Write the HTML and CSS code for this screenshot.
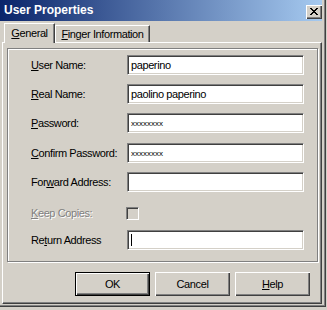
FILE: index.html
```html
<!DOCTYPE html>
<html lang="en">
    <head>
        <meta charset="UTF-8" />
        <title>User Properties</title>
        <link rel="stylesheet" href="styles.css">
    </head>
    <body>
        <div class="window">
            <div class="titlebar">
                <span class="title">User Properties</span>
                <span class="close">
                    <svg width="8" height="7" viewBox="0 0 8 7" shape-rendering="crispEdges">
                        <path d="M0 0h2v1H0z M6 0h2v1H6z M1 1h2v1H1z M5 1h2v1H5z M2 2h4v1H2z M3 3h2v1H3z M2 4h4v1H2z M1 5h2v1H1z M5 5h2v1H5z M0 6h2v1H0z M6 6h2v1H6z" fill="#000" />
                    </svg>
                </span>
            </div>

            <div class="tabs">
                <div class="tab active"><span><u>G</u>eneral</span></div>
                <div class="tab finger"><span><u>F</u>inger Information</span></div>
            </div>

            <div class="panel">
                <div class="group">
                    <div class="row">
                        <div class="label"><u>U</u>ser Name:</div>
                        <div class="field">paperino</div>
                    </div>
                    <div class="row">
                        <div class="label"><u>R</u>eal Name:</div>
                        <div class="field">paolino paperino</div>
                    </div>
                    <div class="row">
                        <div class="label"><u>P</u>assword:</div>
                        <div class="field secret">xxxxxxxx</div>
                    </div>
                    <div class="row confirm">
                        <div class="label"><u>C</u>onfirm Password:</div>
                        <div class="field secret">xxxxxxxx</div>
                    </div>
                    <div class="row">
                        <div class="label">For<u>w</u>ard Address:</div>
                        <div class="field"></div>
                    </div>
                    <div class="row keep">
                        <div class="label disabled"><u>K</u>eep Copies:</div>
                        <div class="checkbox"></div>
                    </div>
                    <div class="row ret">
                        <div class="label">Re<u>t</u>urn Address</div>
                        <div class="field"><span class="caret"></span></div>
                    </div>
                </div>

                <div class="buttons">
                    <div class="btn default">OK</div>
                    <div class="btn">Cancel</div>
                    <div class="btn"><span><u>H</u>elp</span></div>
                </div>
            </div>
        </div>
    </body>
</html>
```

FILE: styles.css
```css
body {
    margin: 0;
    background: #d4d0c8;
    font-family: "Liberation Sans", Arial, sans-serif;
    font-size: 11px;
    color: #000;
}

.window {
    width: 326px;
    height: 307px;
    box-sizing: border-box;
    background: #d4d0c8;
    border-right: 1px solid #404040;
    border-bottom: 1px solid #404040;
    box-shadow: inset -1px -1px #808080;
    padding: 0 3px 1px 0;
}

/* title bar */
.titlebar {
    height: 21px;
    display: flex;
    align-items: flex-start;
    justify-content: space-between;
    background: linear-gradient(to right, #0a246a, #a6caf0);
}
.title {
    color: #fff;
    font-weight: bold;
    font-size: 12px;
    line-height: 21px;
    padding-left: 4px;
}
.close {
    width: 16px;
    height: 14px;
    margin-top: 5px;
    box-sizing: border-box;
    background: #d4d0c8;
    box-shadow: inset 1px 1px #fff, inset -1px -1px #404040, inset -2px -2px #808080;
    padding: 3px 0 0 4px;
}
.close svg {
    display: block;
}

/* tabs */
.tabs {
    height: 21px;
    display: flex;
    align-items: flex-end;
    padding-left: 4px;
    letter-spacing: -0.4px;
}
.tab {
    display: flex;
    align-items: center;
    justify-content: center;
    box-sizing: border-box;
    border-top: 1px solid #fff;
    border-left: 1px solid #fff;
    border-right: 1px solid #404040;
    box-shadow: inset -1px 0 #808080;
    background: #d4d0c8;
}
.tab.active {
    width: 51px;
    height: 20px;
    margin-bottom: -1px;
    position: relative;
    z-index: 1;
    padding-bottom: 1px;
}
.tab.finger {
    width: 95px;
    height: 17px;
}

/* tab page */
.panel {
    height: 262px;
    margin-left: 2px;
    box-sizing: border-box;
    border-top: 1px solid #fff;
    border-left: 1px solid #fff;
    border-right: 1px solid #404040;
    border-bottom: 1px solid #404040;
    box-shadow: inset -1px -1px #808080;
    padding: 5px 0 0 4px;
}

.group {
    width: 311px;
    box-sizing: border-box;
    border: 1px solid #808080;
    box-shadow: inset 1px 1px #fff, 1px 1px #fff;
    padding: 6px 13px 11px 23px;
    letter-spacing: -0.4px;
}

.row {
    display: flex;
    align-items: center;
    height: 20px;
    margin-top: 9px;
}
.row:first-child {
    margin-top: 0;
}
.row.confirm {
    margin-top: 10px;
}
.row.keep {
    margin-top: 11px;
}
.row.ret {
    margin-top: 7px;
}

.label {
    width: 96px;
    flex: none;
}
.label.disabled {
    color: #808080;
    text-shadow: 1px 1px #fff;
}

.field {
    width: 177px;
    height: 20px;
    box-sizing: border-box;
    display: flex;
    align-items: center;
    background: #fff;
    border: 1px solid;
    border-color: #808080 #fff #fff #808080;
    box-shadow: inset 1px 1px #404040, inset -1px -1px #d4d0c8;
    padding: 0 2px 0 3px;
    white-space: nowrap;
}
.field.secret {
    font-size: 8px;
    letter-spacing: 0;
}
.caret {
    display: block;
    width: 1px;
    height: 12px;
    background: #000;
}

.checkbox {
    width: 13px;
    height: 13px;
    box-sizing: border-box;
    margin-left: -1px;
    border: 1px solid;
    border-color: #808080 #fff #fff #808080;
    box-shadow: inset 1px 1px #404040, inset -1px -1px #d4d0c8;
    background: #d4d0c8;
}

/* buttons */
.buttons {
    display: flex;
    justify-content: flex-end;
    gap: 5px;
    margin-top: 10px;
    padding-right: 11px;
    letter-spacing: -0.4px;
}
.btn {
    width: 75px;
    height: 24px;
    box-sizing: border-box;
    display: flex;
    align-items: center;
    justify-content: center;
    background: #d4d0c8;
    box-shadow: inset 1px 1px #fff, inset -1px -1px #404040, inset -2px -2px #808080;
}
.btn.default {
    border: 1px solid #000;
}
```
